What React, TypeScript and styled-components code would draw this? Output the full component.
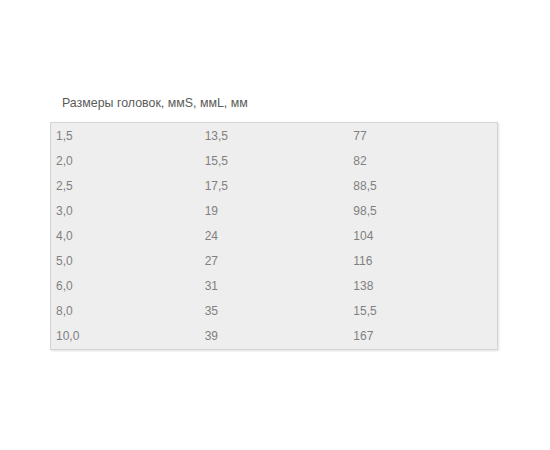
import React from "react";
import styled, { createGlobalStyle } from "styled-components";

const Global = createGlobalStyle`
  html, body { margin: 0; padding: 0; background: #ffffff; }
  body { font-family: "Liberation Sans", Arial, sans-serif; }
`;

const Page = styled.div`
  width: 550px;
  height: 450px;
  box-sizing: border-box;
  padding: 95px 0 0 50px;
`;

const Title = styled.div`
  font-size: 12.4px;
  line-height: 16px;
  color: #5a5a5a;
  padding-left: 12px;
  margin-bottom: 11px;
`;

const Table = styled.div`
  width: 448px;
  box-sizing: border-box;
  background: #eeeeee;
  border: 1px solid #d4d4d4;
  box-shadow: 1px 1px 2px rgba(0, 0, 0, 0.12);
  padding-top: 1px;
  display: grid;
  grid-template-columns: 1fr 1fr 1fr;
`;

const Cell = styled.div`
  height: 25px;
  line-height: 25px;
  padding-left: 5px;
  font-size: 12px;
  color: #808080;
`;

const rows: [string, string, string][] = [
  ["1,5", "13,5", "77"],
  ["2,0", "15,5", "82"],
  ["2,5", "17,5", "88,5"],
  ["3,0", "19", "98,5"],
  ["4,0", "24", "104"],
  ["5,0", "27", "116"],
  ["6,0", "31", "138"],
  ["8,0", "35", "15,5"],
  ["10,0", "39", "167"],
];

export default function App() {
  return (
    <Page>
      <Global />
      <Title>Размеры головок, ммS, ммL, мм</Title>
      <Table>
        {rows.map((r, i) =>
          r.map((c, j) => <Cell key={`${i}-${j}`}>{c}</Cell>)
        )}
      </Table>
    </Page>
  );
}
